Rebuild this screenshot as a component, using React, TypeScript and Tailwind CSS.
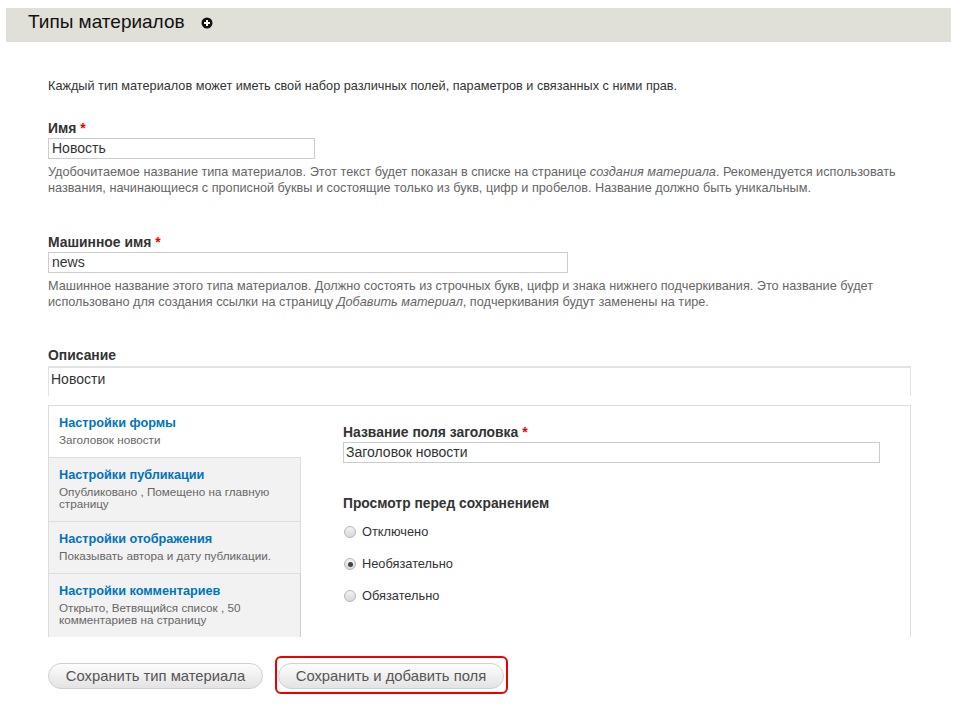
import React from "react";

function PlusIcon() {
  return (
    <svg width="12" height="12" viewBox="0 0 12 12" className="block">
      <circle cx="6" cy="6" r="5.5" fill="#111" />
      <rect x="3" y="5" width="6" height="2" fill="#fff" />
      <rect x="5" y="3" width="2" height="6" fill="#fff" />
    </svg>
  );
}

function Radio({ checked }: { checked?: boolean }) {
  return (
    <span className="w-[12px] h-[12px] rounded-full border border-[#b5b5b5] bg-gradient-to-b from-[#f4f4f4] to-[#d8d8d8] flex items-center justify-center shrink-0">
      {checked && <span className="w-[5px] h-[5px] rounded-full bg-[#444]" />}
    </span>
  );
}

function TabItem({
  title,
  summary,
  active,
  first,
}: {
  title: string;
  summary: React.ReactNode;
  active?: boolean;
  first?: boolean;
}) {
  return (
    <div
      className={
        (active ? "bg-white " : "bg-[#f2f2f2] border-r border-[#cccccc] ") +
        (first ? "" : "border-t border-[#dddddd] ") +
        "pl-[10px] pr-[8px] pt-[8px] pb-[11px]"
      }
    >
      <div className="text-[12.7px] leading-[18px] font-bold text-[#0074bd]">{title}</div>
      <div className="mt-[2px] text-[11.7px] leading-[12px] text-[#666]">{summary}</div>
    </div>
  );
}

export default function App() {
  return (
    <div className="min-h-[714px] bg-white text-[#333] font-['Liberation_Sans',Arial,sans-serif]">
      <div className="pt-[8px] pl-[6px] pr-[11px]">
        <div className="h-[34px] bg-[#e0e0d8] flex items-start pl-[22px]">
          <h1 className="mt-[3px] text-[19px] leading-[22px] text-[#111] font-normal">Типы материалов</h1>
          <span className="ml-[16px] mt-[9px]">
            <PlusIcon />
          </span>
        </div>
      </div>

      <div className="pl-[48px] pr-[51px]">
        <p className="mt-[36px] text-[12.7px] leading-[16px]">
          Каждый тип материалов может иметь свой набор различных полей, параметров и связанных с ними прав.
        </p>

        <div className="mt-[26px]">
          <div className="text-[13.9px] leading-[16px] font-bold">
            Имя <span className="text-[#e00]">*</span>
          </div>
          <div className="mt-[2px] w-[267px] h-[21px] border border-[#cccccc] flex items-center px-[3px] text-[14px]">
            Новость
          </div>
          <div className="mt-[5px] text-[12.7px] leading-[16px] text-[#666]">
            Удобочитаемое название типа материалов. Этот текст будет показан в списке на странице{" "}
            <em>создания материала</em>. Рекомендуется использовать названия, начинающиеся с прописной буквы и
            состоящие только из букв, цифр и пробелов. Название должно быть уникальным.
          </div>
        </div>

        <div className="mt-[38px]">
          <div className="text-[13.9px] leading-[16px] font-bold">
            Машинное имя <span className="text-[#e00]">*</span>
          </div>
          <div className="mt-[2px] w-[520px] h-[21px] border border-[#cccccc] flex items-center px-[3px] text-[14px]">
            news
          </div>
          <div className="mt-[5px] text-[12.7px] leading-[16px] text-[#666]">
            Машинное название этого типа материалов. Должно состоять из строчных букв, цифр и знака нижнего
            подчеркивания. Это название будет использовано для создания ссылки на страницу{" "}
            <em>Добавить материал</em>, подчеркивания будут заменены на тире.
          </div>
        </div>

        <div className="mt-[37px]">
          <div className="text-[13.9px] leading-[16px] font-bold">Описание</div>
          <div className="mt-[3px] h-[30px] border-t-2 border-x border-[#e2e2e2] px-[2px] pt-[1px] text-[14px] leading-[20px]">
            Новости
          </div>
        </div>

        <div className="mt-[9px] h-[232px] border-t border-l border-r border-[#dddddd] flex">
          <div className="w-[252px] shrink-0 flex flex-col">
            <TabItem first active title="Настройки формы" summary="Заголовок новости" />
            <TabItem
              title="Настройки публикации"
              summary={
                <>
                  Опубликовано , Помещено на главную
                  <br />
                  страницу
                </>
              }
            />
            <TabItem title="Настройки отображения" summary="Показывать автора и дату публикации." />
            <div className="flex-1 bg-[#f2f2f2] border-r border-t border-[#dddddd] border-r-[#cccccc] pl-[10px] pr-[8px] pt-[8px]">
              <div className="text-[12.7px] leading-[18px] font-bold text-[#0074bd]">Настройки комментариев</div>
              <div className="mt-[2px] text-[11.7px] leading-[12px] text-[#666]">
                Открыто, Ветвящийся список , 50
                <br />
                комментариев на страницу
              </div>
            </div>
          </div>

          <div className="flex-1 pl-[42px] pr-[30px] pt-[18px]">
            <div className="text-[13.9px] leading-[16px] font-bold">
              Название поля заголовка <span className="text-[#e00]">*</span>
            </div>
            <div className="mt-[2px] h-[21px] border border-[#cccccc] flex items-center px-[2px] text-[14px]">
              Заголовок новости
            </div>

            <div className="mt-[32px] text-[13.8px] leading-[18px] font-bold">Просмотр перед сохранением</div>
            <div className="mt-[10px] flex flex-col gap-[14px]">
              {[
                { l: "Отключено", c: false },
                { l: "Необязательно", c: true },
                { l: "Обязательно", c: false },
              ].map((r) => (
                <div key={r.l} className="h-[18px] flex items-center gap-[6px] pl-[1px] text-[12.8px]">
                  <Radio checked={r.c} />
                  <span>{r.l}</span>
                </div>
              ))}
            </div>
          </div>
        </div>

        <div className="mt-[19px] flex items-start">
          <button className="mt-[7px] h-[26px] w-[215px] rounded-full border border-[#d0d0d0] bg-gradient-to-b from-[#fdfdfd] to-[#e3e3e3] text-[14.8px] text-[#555] flex items-center justify-center">
            Сохранить тип материала
          </button>
          <div className="ml-[12px] border-[2.5px] border-[#ee0000] rounded-[6px] pl-[1px] pr-[2px] pt-[5px] pb-[3px]">
            <button className="h-[26px] w-[226px] rounded-full border border-[#d0d0d0] bg-gradient-to-b from-[#fdfdfd] to-[#e3e3e3] text-[14.8px] text-[#555] flex items-center justify-center">
              Сохранить и добавить поля
            </button>
          </div>
        </div>
      </div>
    </div>
  );
}
